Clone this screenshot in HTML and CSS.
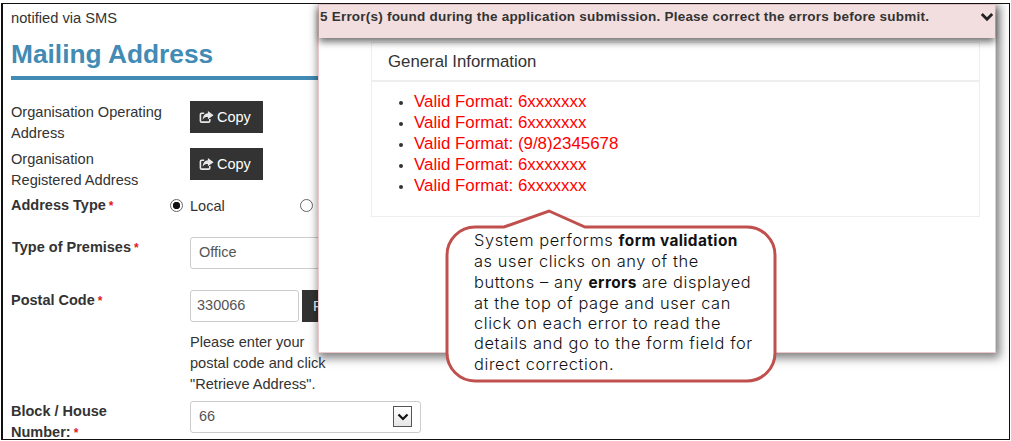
FILE: index.html
```html
<!DOCTYPE html>
<html lang="en">
<head>
<meta charset="utf-8">
<title>Mailing Address</title>
<link rel="stylesheet" href="styles.css">
</head>
<body>
<div class="frame">
  <main class="page">
    <p class="notified">notified via SMS</p>
    <h1 class="heading">Mailing Address</h1>
    <div class="form">
      <div class="row row-copy">
        <div class="label">Organisation Operating Address</div>
        <button class="btn btn-copy"><svg class="copy-icon" viewBox="0 0 16 14"><path d="M11.500 9v2.200a1.300 1.300 0 0 1-1.300 1.300H2.800a1.300 1.300 0 0 1-1.300-1.300V4.300A1.300 1.300 0 0 1 2.800 3h2.700" fill="none" stroke="currentColor" stroke-width="1.700"/><path d="M9.500 0.500 15.500 5 9.500 9.500V7C7 7 5 7.500 4 10 4 6 6 3.300 9.500 3Z" fill="currentColor"/></svg>Copy</button>
      </div>
      <div class="row row-copy row-copy2">
        <div class="label">Organisation<br>Registered Address</div>
        <button class="btn btn-copy"><svg class="copy-icon" viewBox="0 0 16 14"><path d="M11.500 9v2.200a1.300 1.300 0 0 1-1.300 1.300H2.800a1.300 1.300 0 0 1-1.300-1.300V4.300A1.300 1.300 0 0 1 2.800 3h2.700" fill="none" stroke="currentColor" stroke-width="1.700"/><path d="M9.500 0.500 15.500 5 9.500 9.500V7C7 7 5 7.500 4 10 4 6 6 3.300 9.500 3Z" fill="currentColor"/></svg>Copy</button>
      </div>
      <div class="row row-type">
        <div class="label strong">Address Type<span class="req">*</span></div>
        <div class="radios">
          <span class="radio radio-on"></span><span class="radio-label">Local</span>
          <span class="radio"></span><span class="radio-label">Foreign</span>
        </div>
      </div>
      <div class="row row-premises">
        <div class="label strong">Type of Premises<span class="req">*</span></div>
        <div class="field field-wide">Office</div>
      </div>
      <div class="row row-postal">
        <div class="label strong">Postal Code<span class="req">*</span></div>
        <div class="postal">
          <div class="postal-line">
            <div class="field field-postal">330066</div>
            <button class="btn btn-retrieve">Retrieve Address</button>
          </div>
          <p class="help">Please enter your<br>postal code and click<br>"Retrieve Address".</p>
        </div>
      </div>
      <div class="row row-block">
        <div class="label strong">Block / House<br>Number:<span class="req">*</span></div>
        <div class="field field-select">66
          <span class="select-arrow"><svg viewBox="0 0 12 8" class="select-chevron"><path d="M1.500 1.500 6 6 10.500 1.500" fill="none" stroke="currentColor" stroke-width="2.200"/></svg></span>
        </div>
      </div>
    </div>
  </main>

  <section class="modal">
    <div class="banner">
      <span class="banner-text">5 Error(s) found during the application submission. Please correct the errors before submit.</span>
      <svg class="banner-chevron" viewBox="0 0 14 10"><path d="M1.800 2 7 7.200 12.200 2" fill="none" stroke="currentColor" stroke-width="2.800"/></svg>
    </div>
    <div class="card">
      <h2 class="card-title">General Information</h2>
      <ul class="errors">
        <li>Valid Format: 6xxxxxxx</li>
        <li>Valid Format: 6xxxxxxx</li>
        <li>Valid Format: (9/8)2345678</li>
        <li>Valid Format: 6xxxxxxx</li>
        <li>Valid Format: 6xxxxxxx</li>
      </ul>
    </div>
  </section>

  <aside class="callout">
    <svg class="callout-shape" viewBox="0 0 336 176"><path d="M30 18H59L104 2 140 18H302A28 28 0 0 1 330 46V144A28 28 0 0 1 302 172H30A28 28 0 0 1 2 144V46A28 28 0 0 1 30 18Z" fill="#fff" stroke="#c0504d" stroke-width="3"/></svg>
    <p class="callout-text">System performs <b>form validation</b><br>as user clicks on any of the<br>buttons – any <b>errors</b> are displayed<br>at the top of page and user can<br>click on each error to read the<br>details and go to the form field for<br>direct correction.</p>
  </aside>
</div>
</body>
</html>
```
FILE: styles.css
```css
* { box-sizing: border-box; }
html, body { margin: 0; padding: 0; background: #fff; }
body { padding: 3px 1px 1px 1px; height: 441px; overflow: hidden; font-family: "Liberation Sans", Arial, sans-serif; color: #333; }
.frame { position: relative; width: 1009px; height: 437px; border: 1px solid #111; border-left-width: 2px; overflow: hidden; background: #fff; }
.page { padding: 4px 0 0 8px; width: 660px; }
.notified { margin: 0; font-size: 14.700px; line-height: 21px; }
.heading { margin: 8px 0 0; width: 320px; padding-bottom: 5px; border-bottom: 4px solid #428bb5; color: #428bb5; font-size: 26.300px; line-height: 34px; font-weight: 700; }
.form { margin-top: 21px; }
.row { display: grid; grid-template-columns: 179px 1fr; }
.label { font-size: 14.600px; line-height: 21px; padding-right: 10px; }
.strong { font-weight: 700; font-size: 14.500px; }
.req { color: #e02020; margin-left: 3px; font-weight: 700; font-size: 12px; }
.btn { border: 0; background: #333; color: #fff; font-family: inherit; font-size: 14.500px; display: block; padding: 0; }
.btn-copy { width: 73px; height: 32px; display: flex; align-items: center; justify-content: flex-start; gap: 3px; padding-left: 9px; }
.copy-icon { width: 15px; height: 14px; color: #e8e8e8; }
.row-copy { height: 47px; }
.row-copy .label { margin-top: 1px; }
.row-copy2 { height: 41px; }
.row-type { height: 48px; }
.row-type .label { padding-top: 6px; }
.radios { display: flex; align-items: center; height: 21px; margin-top: 6px; margin-left: -20px; font-size: 14.500px; }
.radio { width: 13px; height: 13px; border-radius: 50%; border: 1px solid #666; background: #fff; flex: none; }
.radio-on { background: radial-gradient(circle, #111 0 3.400px, #fff 4px); }
.radio-label { margin-left: 7px; width: 110px; }
.field { border: 1px solid #ccc; border-radius: 3px; background: #fff; color: #555; font-size: 14.500px; height: 32px; line-height: 28px; padding-left: 8px; }
.field-wide { width: 231px; }
.row-premises { height: 53px; }
.row-premises .label { margin-left: 1px; }
.row-postal { height: 111px; }
.postal-line { display: flex; gap: 3px; }
.field-postal { width: 109px; padding-left: 6px; }
.btn-retrieve { width: 130px; height: 32px; text-align: left; padding-left: 11px; }
.help { margin: 10px 0 0; font-size: 14.600px; line-height: 21px; }
.field-select { width: 231px; position: relative; }
.select-arrow { position: absolute; right: 8px; top: 4px; width: 19px; height: 21px; border: 1px solid #555; background: linear-gradient(#fff, #e6e6e6); color: #111; display: flex; align-items: center; justify-content: center; }
.select-chevron { width: 12px; height: 8px; }

.modal { position: absolute; left: 315px; top: 0; width: 678px; height: 349px; background: #fff; border: 1px solid #ecc8cc; box-shadow: 2px 3px 9px 2px rgba(0,0,0,.5); display: flex; flex-direction: column; }
.banner { position: relative; height: 33px; flex: none; background: #f2dede; display: flex; padding: 4px 0 0 1px; box-shadow: 0 4px 7px rgba(0,0,0,.55); z-index: 1; }
.banner-text { font-size: 13.500px; line-height: 16px; font-weight: 700; color: #333; letter-spacing: .22px; white-space: nowrap; }
.banner-chevron { position: absolute; right: 1px; top: 7px; width: 14px; height: 10px; color: #222; }
.card { margin: 4px 0 0 52px; width: 609px; height: 175px; border: 1px solid #eee; }
.card-title { margin: 0; height: 39px; padding: 9px 0 0 16px; font-size: 16.800px; line-height: 20px; font-weight: 400; border-bottom: 2px solid #eee; color: #333; }
.errors { margin: 9px 0 0; padding: 0 0 0 42px; list-style: disc; font-size: 16.900px; line-height: 21px; color: #ff0000; }
.errors li::marker { color: #333; font-size: 13px; }

.callout { position: absolute; left: 442px; top: 205px; width: 336px; height: 176px; }
.callout-shape { position: absolute; left: 0; top: 0; width: 336px; height: 176px; }
.callout-text { position: relative; margin: 0; padding: 21px 0 0 29px; font-family: "Inter", "Open Sans", sans-serif; font-size: 16.400px; font-weight: 300; letter-spacing: .6px; line-height: 20.300px; color: #111; white-space: nowrap; }
.callout-text b { font-weight: 700; font-size: 15.400px; letter-spacing: .4px; }
```
